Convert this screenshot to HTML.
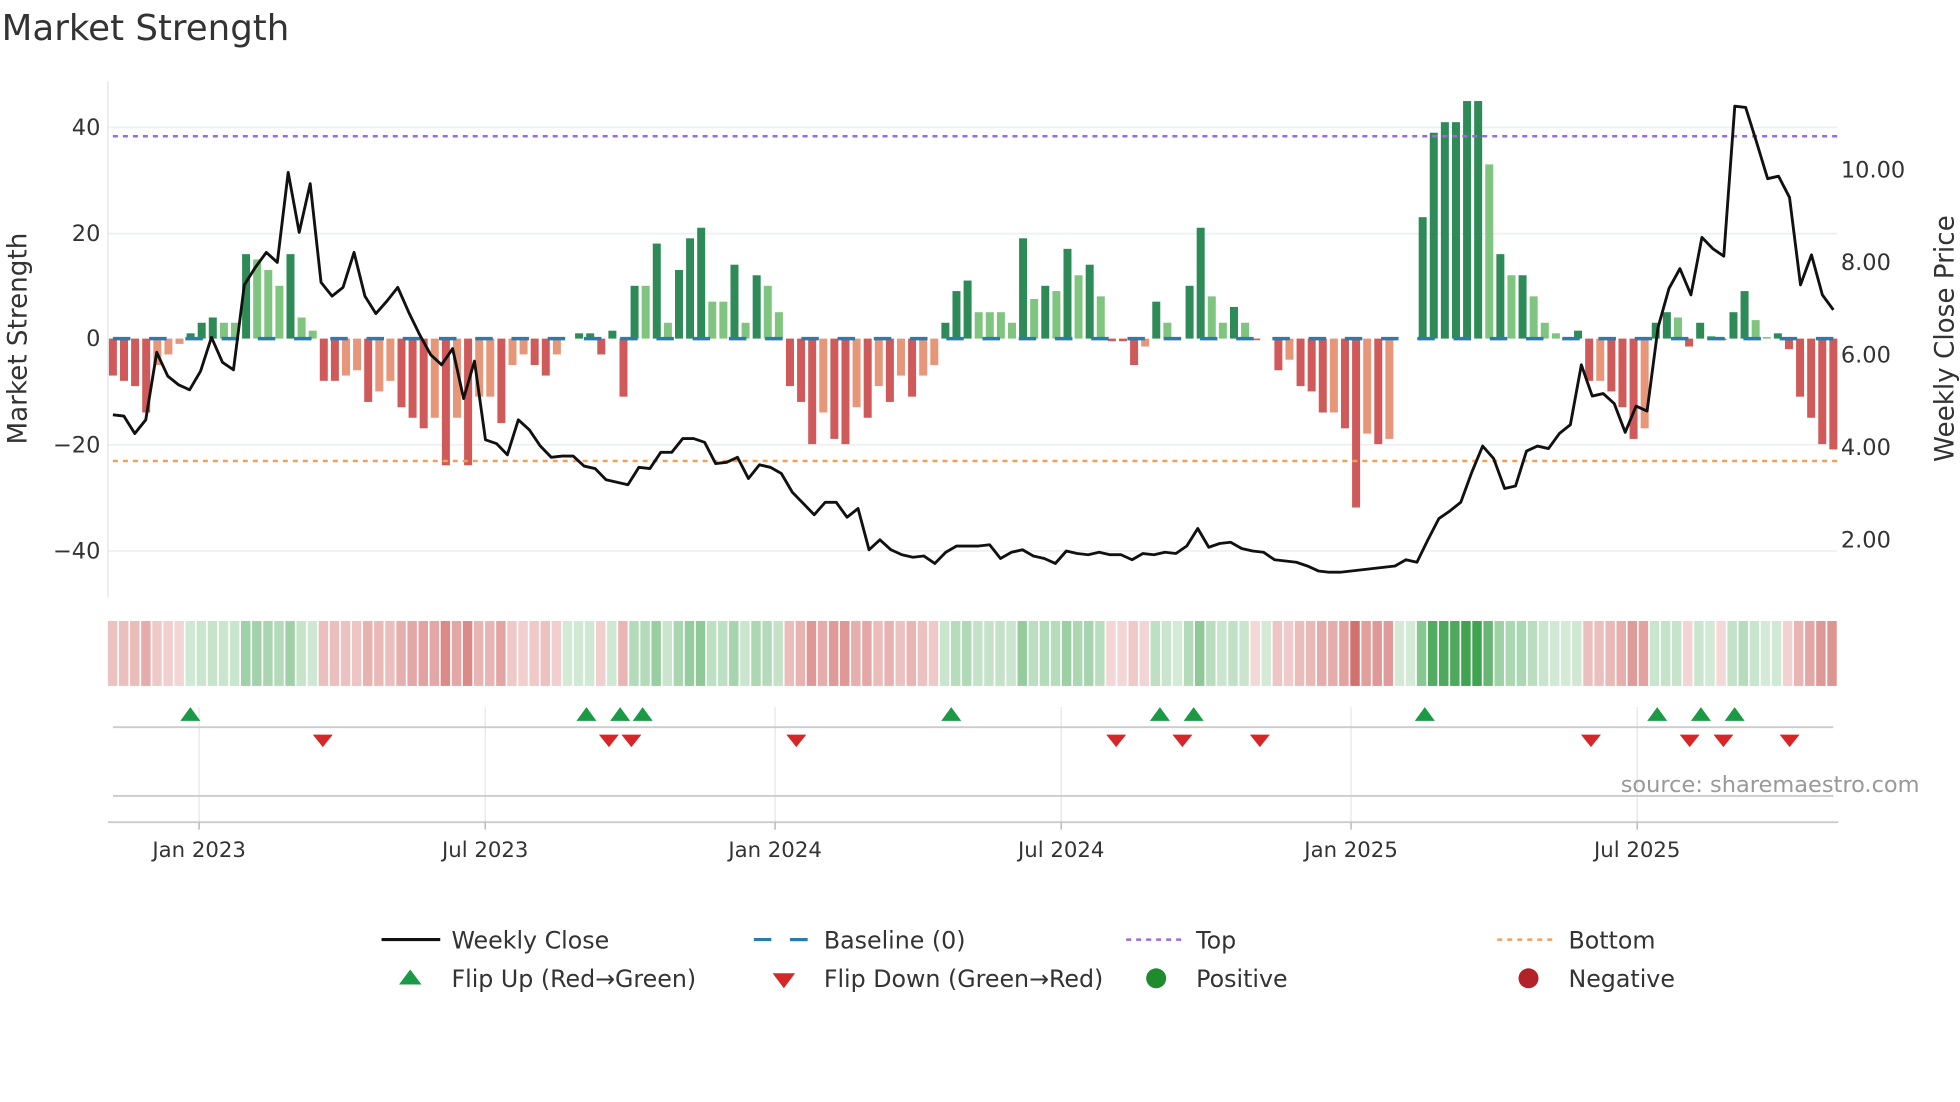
<!DOCTYPE html>
<html><head><meta charset="utf-8"><style>
html,body{margin:0;padding:0;background:#fff;}
svg{display:block;font-family:"DejaVu Sans","Liberation Sans",sans-serif;}
</style></head><body>
<svg id="s" width="1960" height="1102" viewBox="0 0 1568 882" xmlns="http://www.w3.org/2000/svg">
<rect width="1568" height="882" fill="#fff"/>
<text x="1" y="32" font-size="28.5" fill="#333">Market Strength</text>
<g stroke="#eef0f4" stroke-width="1.5">
<line x1="86" x2="1470" y1="102" y2="102"/><line x1="86" x2="1470" y1="187" y2="187"/>
<line x1="86" x2="1470" y1="356" y2="356"/><line x1="86" x2="1470" y1="441" y2="441"/>
</g>
<line x1="86" x2="86" y1="65" y2="478" stroke="#e6e8ec" stroke-width="1.2"/>
<g font-size="18" fill="#333" text-anchor="end">
<text x="80" y="108">40</text><text x="80" y="193">20</text><text x="80" y="277">0</text>
<text x="80" y="362">−20</text><text x="80" y="447">−40</text>
</g>
<g font-size="18" fill="#333">
<text x="1473" y="142">10.00</text><text x="1473" y="216">8.00</text><text x="1473" y="290">6.00</text>
<text x="1473" y="364">4.00</text><text x="1473" y="438">2.00</text>
</g>
<text transform="translate(21,271) rotate(-90)" font-size="21" fill="#333" text-anchor="middle">Market Strength</text>
<text transform="translate(1563,271) rotate(-90)" font-size="21" fill="#333" text-anchor="middle">Weekly Close Price</text>
<g id="bars"></g>
<line x1="90" x2="1470" y1="271" y2="271" stroke="#2b7bb0" stroke-width="2.8" stroke-dasharray="14 15"/>
<line x1="90" x2="1470" y1="109" y2="109" stroke="#9b6bd6" stroke-width="2" stroke-dasharray="4 4"/>
<line x1="90" x2="1470" y1="369" y2="369" stroke="#f0a05a" stroke-width="2" stroke-dasharray="4 4"/>
<polyline id="price" fill="none" stroke="#111" stroke-width="2.3" stroke-linejoin="round"/>
<g id="strip"></g>
<g stroke="#e4e6ea" stroke-width="1">
<line x1="159" x2="159" y1="566" y2="658"/><line x1="388" x2="388" y1="566" y2="658"/>
<line x1="620" x2="620" y1="566" y2="658"/><line x1="849" x2="849" y1="566" y2="658"/>
<line x1="1081" x2="1081" y1="566" y2="658"/><line x1="1310" x2="1310" y1="566" y2="658"/>
</g>
<line x1="90" x2="1467" y1="582" y2="582" stroke="#ccc" stroke-width="1.5"/>
<line x1="90" x2="1467" y1="637" y2="637" stroke="#ccc" stroke-width="1.5"/>
<line x1="86" x2="1471" y1="658" y2="658" stroke="#ccc" stroke-width="1.5"/>
<g stroke="#bbb" stroke-width="1.2">
<line x1="159" x2="159" y1="658" y2="664"/><line x1="388" x2="388" y1="658" y2="664"/>
<line x1="620" x2="620" y1="658" y2="664"/><line x1="849" x2="849" y1="658" y2="664"/>
<line x1="1081" x2="1081" y1="658" y2="664"/><line x1="1310" x2="1310" y1="658" y2="664"/>
</g>
<g id="flips"></g>
<g font-size="17" fill="#333" text-anchor="middle">
<text x="159" y="686">Jan 2023</text><text x="388" y="686">Jul 2023</text><text x="620" y="686">Jan 2024</text>
<text x="849" y="686">Jul 2024</text><text x="1081" y="686">Jan 2025</text><text x="1310" y="686">Jul 2025</text>
</g>
<text x="1536" y="634" font-size="18" fill="#999" text-anchor="end">source: sharemaestro.com</text>
<g font-size="19" fill="#333">
<line x1="305" x2="352" y1="752" y2="752" stroke="#111" stroke-width="2.5"/>
<text x="361" y="759">Weekly Close</text>
<line x1="603" x2="647" y1="752" y2="752" stroke="#2b7bb0" stroke-width="2.5" stroke-dasharray="14 15"/>
<line x1="632" x2="646" y1="752" y2="752" stroke="#2b7bb0" stroke-width="2.5"/>
<text x="659" y="759">Baseline (0)</text>
<line x1="901" x2="945" y1="752" y2="752" stroke="#9b6bd6" stroke-width="2" stroke-dasharray="4 4"/>
<text x="957" y="759">Top</text>
<line x1="1198" x2="1243" y1="752" y2="752" stroke="#f0a05a" stroke-width="2" stroke-dasharray="4 4"/>
<text x="1255" y="759">Bottom</text>
<polygon points="319,788 337,788 328,776" fill="#1a9a45"/>
<text x="361" y="790">Flip Up (Red→Green)</text>
<polygon points="618,779 636,779 627,791" fill="#d62728"/>
<text x="659" y="790">Flip Down (Green→Red)</text>
<circle cx="925" cy="783" r="8" fill="#1f8a2e"/>
<text x="957" y="790">Positive</text>
<circle cx="1223" cy="783" r="8" fill="#b22228"/>
<text x="1255" y="790">Negative</text>
</g>
</svg>
<script>
var NS="http://www.w3.org/2000/svg";
var d="-7R -8R -9R -14R -5O -3O -1O 1D 3D 4D 3L 3L 16D 15L 13L 10L 16D 4L 1.5L -8R -8R -7O -6O -12R -10O -8O -13R -15R -17R -15O -24R -15O -24R -11O -11O -16R -5O -3O -5R -7R -3O 0L 1D 1D -3R 1.5D -11R 10D 10L 18D 3L 13D 19D 21D 7L 7L 14D 3L 12D 10L 5L -9R -12R -20R -14O -19R -20R -13O -15R -9O -12R -7O -11R -7O -5O 3D 9D 11D 5L 5L 5L 3L 19D 7.5L 10D 9L 17D 12L 14D 8L -0.5R -0.5R -5R -1.5O 7D 3L 0L 10D 21D 8L 3L 6D 3L -0.3R 0L -6R -4O -9R -10R -14R -14O -17R -32R -18O -20R -19O 0L 0L 23D 39D 41D 41D 45D 45D 33L 16D 12L 12D 8L 3L 1L 0L 1.5D -8R -8O -10R -13R -19R -17O 3D 5D 4L -1.5R 3D 0.5L -0.3R 5D 9D 3.5L 0.3L 1D -2R -11R -15R -20R -21R".split(" ");
var col={D:"#2e8b57",L:"#7fc47f",R:"#d05a5a",O:"#e8967a"};
var bars=document.getElementById("bars"),strip=document.getElementById("strip");
var step=(1467-90)/(d.length-1);
function mix(c,t){var r=parseInt(c.substr(1,2),16),g=parseInt(c.substr(3,2),16),b=parseInt(c.substr(5,2),16);
return "rgb("+Math.round(255+(r-255)*t)+","+Math.round(255+(g-255)*t)+","+Math.round(255+(b-255)*t)+")";}
var sw=(1471-86)/d.length;
for(var i=0;i<d.length;i++){
 var v=parseFloat(d[i]),c=d[i].slice(-1),x=90+i*step;
 var h=Math.abs(v)*4.225;
 if(h>0.3){var r=document.createElementNS(NS,"rect");
 r.setAttribute("x",x-3.2);r.setAttribute("width",6.4);
 r.setAttribute("y",v>0?271-h:271);r.setAttribute("height",h);r.setAttribute("fill",col[c]);bars.appendChild(r);}
 var s=document.createElementNS(NS,"rect");
 s.setAttribute("x",86+i*sw);s.setAttribute("width",sw-1.3);s.setAttribute("y",497);s.setAttribute("height",52);
 var pos=(c=="D"||c=="L");
 var t=pos?0.22+0.75*Math.min(Math.abs(v)/45,1):0.22+0.6*Math.min(Math.abs(v)/32,1);
 s.setAttribute("fill",pos?mix("#3aa04a",t):mix("#c8524e",t));strip.appendChild(s);
}
var py="332 333 347 336 282 301 308 312 297 270 290 296 228 214 202 210 138 186 147 226 237 230 202 237 251 241 230 250 268 284 292 279 319 289 352 355 364 336 344 357 366 365 365 373 375 384 386 388 374 375 362 362 351 351 354 371 370 366 383 372 374 379 394 403 412 402 402 414 407 440 432 440 444 446 445 451 442 437 437 437 436 447 442 440 445 447 451 441 443 444 442 444 444 448 443 444 442 443 437 423 438 435 434 439 441 442 448 449 450 453 457 458 458 457 456 455 454 453 448 450 432 415 409 402 378 357 367 391 389 361 357 359 347 340 292 317 315 323 346 325 329 262 231 215 236 190 199 205 85 86 114 143 141 158 228 204 236 248".split(" ");
var pst=(1467-90)/(py.length-1),pts=[];
for(var j=0;j<py.length;j++)pts.push((90+j*pst).toFixed(1)+","+py[j]);
document.getElementById("price").setAttribute("points",pts.join(" "));
var fl=document.getElementById("flips");
[152,469,496,514,761,928,955,1140,1326,1361,1388].forEach(function(x){var p=document.createElementNS(NS,"polygon");
p.setAttribute("points",(x-8)+",577 "+(x+8)+",577 "+x+",566");p.setAttribute("fill","#1a9a45");fl.appendChild(p);});
[258,487,505,637,893,946,1008,1273,1352,1379,1432].forEach(function(x){var p=document.createElementNS(NS,"polygon");
p.setAttribute("points",(x-8)+",588 "+(x+8)+",588 "+x+",598");p.setAttribute("fill","#d62728");fl.appendChild(p);});
</script>
</body></html>
